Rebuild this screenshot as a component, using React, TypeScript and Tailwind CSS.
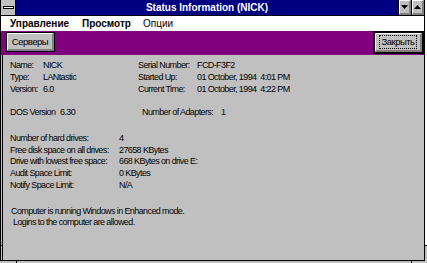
import React from 'react'

const FONT = { fontFamily: '"Liberation Sans", Arial, sans-serif' }

const TOP_ROWS = [
  ['Name:', 'NICK', 'Serial Number:', 'FCD-F3F2'],
  ['Type:', 'LANtastic', 'Started Up:', '01 October, 1994  4:01 PM'],
  ['Version:', '6.0', 'Current Time:', '01 October, 1994  4:22 PM'],
]

const DISK_ROWS = [
  ['Number of hard drives:', '4'],
  ['Free disk space on all drives:', '27658 KBytes'],
  ['Drive with lowest free space:', '668 KBytes on drive E:'],
  ['Audit Space Limit:', '0 KBytes'],
  ['Notify Space Limit:', 'N/A'],
]

function Arrow({ up }: { up?: boolean }) {
  return (
    <svg width="7" height="4" viewBox="0 0 7 4">
      <polygon points={up ? '3.5,0 7,4 0,4' : '0,0 7,0 3.5,4'} fill="#000" />
    </svg>
  )
}

function TitleButton({ up }: { up?: boolean }) {
  return (
    <div className="w-[13px] h-full border-l border-black">
      <div className="h-full bg-[#c0c0c0] border-t border-l border-white border-b-2 border-r-2 border-b-[#808080] border-r-[#808080] flex items-center justify-center">
        <Arrow up={up} />
      </div>
    </div>
  )
}

export default function App() {
  return (
    <div className="w-[427px] h-[263px] bg-[#c0c0c0] relative overflow-hidden flex" style={FONT}>
      <div className="w-[425px] h-[261px] border-l border-r border-b border-black flex flex-col">
        {/* title bar */}
        <div className="h-[16px] border-b border-black flex">
          <div className="w-[15px] border-r border-black bg-[#c0c0c0] flex items-center justify-center">
            <div className="w-[11px] h-[3px] bg-white border border-black" />
          </div>
          <div className="flex-1 bg-[#000080] flex items-center justify-center">
            <span className="text-[10px] font-bold text-white leading-none">Status Information (NICK)</span>
          </div>
          <TitleButton />
          <TitleButton up />
        </div>

        {/* menu */}
        <div className="h-[15px] bg-white flex items-center pl-[9px] text-[10px] text-black leading-none">
          <span className="w-[72px] font-bold">Управление</span>
          <span className="w-[61px] font-bold">Просмотр</span>
          <span>Опции</span>
        </div>

        {/* toolbar */}
        <div className="h-[24px] bg-[#800080] flex justify-between items-start">
          <div className="ml-[5px] mt-[1px] w-[49px] h-[20px] border border-black">
            <div className="h-full bg-[#c0c0c0] border-t border-l border-white border-b-2 border-r-2 border-b-[#808080] border-r-[#808080] flex items-center justify-center">
              <span className="text-[9.5px] tracking-[-0.5px] leading-none text-black">Серверы</span>
            </div>
          </div>
          <div className="w-[51px] h-[23px] border-2 border-black">
            <div className="h-full bg-[#c0c0c0] border-t border-l border-white border-b-2 border-r-2 border-b-[#808080] border-r-[#808080] flex items-center justify-center">
              <span className="border border-dotted border-black px-[1px] py-[1px] text-[9.5px] tracking-[-0.5px] leading-none text-black">
                Закрыть
              </span>
            </div>
          </div>
        </div>

        {/* content */}
        <div className="flex-1 ml-[1px] border-l border-black pl-[7px] pt-[5px] text-[9px] tracking-[-0.6px] leading-[11.75px] text-black whitespace-pre">
          {TOP_ROWS.map(r => (
            <div key={r[0]} className="flex">
              <span className="w-[33px] shrink-0">{r[0]}</span>
              <span className="w-[95px] shrink-0">{r[1]}</span>
              <span className="w-[59px] shrink-0">{r[2]}</span>
              <span>{r[3]}</span>
            </div>
          ))}
          <div className="flex mt-[11.75px]">
            <span className="w-[50px] shrink-0">DOS Version</span>
            <span className="w-[82px] shrink-0">6.30</span>
            <span className="w-[79px] shrink-0">Number of Adapters:</span>
            <span>1</span>
          </div>
          <div className="mt-[14px]">
            {DISK_ROWS.map(r => (
              <div key={r[0]} className="flex">
                <span className="w-[109px] shrink-0">{r[0]}</span>
                <span>{r[1]}</span>
              </div>
            ))}
          </div>
          <div className="mt-[14px] pl-[1px]">Computer is running Windows in Enhanced mode.</div>
          <div className="pl-[3px]">Logins to the computer are allowed.</div>
        </div>
      </div>
      <div className="w-[2px] h-[245px] bg-white" />

      {/* frame corner ticks */}
      <div className="absolute left-0 top-[245px] w-[2px] h-[1px] bg-black" />
      <div className="absolute right-0 top-[245px] w-[3px] h-[1px] bg-black" />
      <div className="absolute left-[16px] top-[261px] w-[1px] h-[2px] bg-black" />
      <div className="absolute left-[411px] top-[261px] w-[1px] h-[2px] bg-black" />
    </div>
  )
}
